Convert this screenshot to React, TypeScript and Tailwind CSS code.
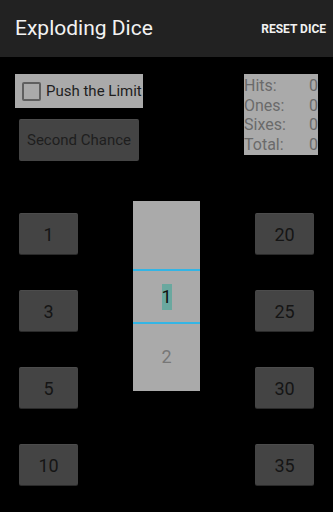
import React from "react";

const leftDice = ["1", "3", "5", "10"];
const rightDice = ["20", "25", "30", "35"];
const stats = [
  ["Hits:", "0"],
  ["Ones:", "0"],
  ["Sixes:", "0"],
  ["Total:", "0"],
];

function DieButton({ label }: { label: string }) {
  return (
    <button className="flex h-[41px] w-[59px] items-center justify-center rounded-[2px] border-t border-[#4c4c4c] bg-[#444444] text-[18px] text-[#151515] shadow-[0_1px_0_#2a2a2a]">
      {label}
    </button>
  );
}

export default function App() {
  return (
    <div
      className="flex h-[512px] w-[333px] flex-col overflow-hidden bg-black"
      style={{ fontFamily: "Roboto, 'Liberation Sans', sans-serif" }}
    >
      {/* ACTION BAR */}
      <header className="flex h-[57px] shrink-0 items-center justify-between bg-[#222222] pl-[15px] pr-[7px]">
        <h1 className="text-[21px] leading-none text-[#f2f2f2]">Exploding Dice</h1>
        <span className="text-[12px] font-bold leading-none text-[#f2f2f2]">RESET DICE</span>
      </header>

      {/* OPTIONS + STATS */}
      <div className="flex items-start justify-between pt-[17px] pl-[15px] pr-[15px]">
        <div className="flex flex-col">
          <label className="flex h-[34px] w-[128px] items-center gap-[5px] bg-[#aaaaaa] pl-[7px]">
            <span className="h-[19px] w-[19px] rounded-[2px] border-2 border-[#5f5f5f]" />
            <span className="text-[15px] leading-none text-[#1e1e1e]">Push the Limit</span>
          </label>
          <button className="ml-[4px] mt-[11px] flex h-[42px] w-[120px] items-center justify-center rounded-[2px] border-t border-[#4c4c4c] bg-[#444444] text-[15px] text-[#1e1e1e]">
            Second Chance
          </button>
        </div>
        <div className="flex h-[81px] w-[74px] flex-col bg-[#aaaaaa] pt-[2px] text-[16px] leading-[20px] text-[#6a6a6a]">
          {stats.map(([k, v]) => (
            <div key={k} className="flex h-[19.5px] justify-between">
              <span>{k}</span>
              <span>{v}</span>
            </div>
          ))}
        </div>
      </div>

      {/* DICE + PICKER */}
      <div className="mt-[40px] flex items-start">
        <div className="ml-[19px] flex flex-col gap-[36px] pt-[12px]">
          {leftDice.map((d) => (
            <DieButton key={d} label={d} />
          ))}
        </div>

        <div className="ml-[55px] flex h-[190px] w-[67px] flex-col bg-[#aaaaaa]">
          <div className="h-[68px]" />
          <div className="h-[2px] bg-[#33b5e5]" />
          <div className="flex h-[51px] items-center justify-center">
            <span className="flex h-[26px] w-[10px] items-center justify-center bg-[#6aa89f] text-[18px] leading-none text-[#111111]">
              1
            </span>
          </div>
          <div className="h-[2px] bg-[#33b5e5]" />
          <div className="flex h-[67px] items-start justify-center pt-[24px] text-[18px] leading-none text-[#777777]">
            2
          </div>
        </div>

        <div className="ml-[55px] flex flex-col gap-[36px] pt-[12px]">
          {rightDice.map((d) => (
            <DieButton key={d} label={d} />
          ))}
        </div>
      </div>
    </div>
  );
}
